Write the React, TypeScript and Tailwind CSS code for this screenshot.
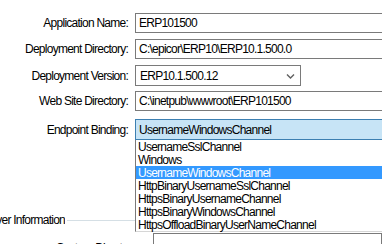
import React from 'react';

const font = "font-['Liberation_Sans',Arial,sans-serif] text-[12px] tracking-[-0.75px] text-black";

const options = [
  'UsernameSslChannel',
  'Windows',
  'UsernameWindowsChannel',
  'HttpBinaryUsernameSslChannel',
  'HttpsBinaryUsernameChannel',
  'HttpsBinaryWindowsChannel',
  'HttpsOffloadBinaryUserNameChannel',
];

function Label({ children }: { children: React.ReactNode }) {
  return <div className="w-[128px] shrink-0 text-right leading-none">{children}</div>;
}

function TextBox({ value }: { value: string }) {
  return (
    <div className="ml-[7px] -mr-[10px] flex h-full flex-1 items-center border border-[#7a7a7a] bg-white pl-[3px] leading-none">
      {value}
    </div>
  );
}

function Chevron() {
  return (
    <svg width="9" height="6" viewBox="0 0 9 6" className="text-[#606060]">
      <path d="M1 1.5 L4.5 5 L8 1.5" fill="none" stroke="currentColor" strokeWidth="1.4" />
    </svg>
  );
}

export default function App() {
  return (
    <div className={`relative h-[244px] w-[382px] overflow-hidden bg-white ${font}`}>
      <div className="flex flex-col">
        {/* Application Name */}
        <div className="mt-[13px] flex h-[20px] items-center">
          <Label>Application Name:</Label>
          <TextBox value="ERP101500" />
        </div>

        {/* Deployment Directory */}
        <div className="mt-[6px] flex h-[20px] items-center">
          <Label>Deployment Directory:</Label>
          <TextBox value="C:\epicor\ERP10\ERP10.1.500.0" />
        </div>

        {/* Deployment Version (combo) */}
        <div className="mt-[6px] flex h-[21px] items-center">
          <Label>Deployment Version:</Label>
          <div className="ml-[7px] flex h-full w-[166px] items-center justify-between border border-[#7a7a7a] bg-white pl-[4px] pr-[5px] leading-none">
            <span>ERP10.1.500.12</span>
            <Chevron />
          </div>
        </div>

        {/* Web Site Directory */}
        <div className="mt-[5px] flex h-[20px] items-center">
          <Label>Web Site Directory:</Label>
          <TextBox value="C:\inetpub\wwwroot\ERP101500" />
        </div>

        {/* Endpoint Binding - open dropdown */}
        <div className="mt-[8px] flex h-[21px] items-center">
          <Label>Endpoint Binding:</Label>
          <div className="relative ml-[7px] -mr-[10px] h-full flex-1">
            <div className="flex h-full items-center border border-[#3c7fb1] bg-[#c7e4f6] pl-[3px] leading-none">
              UsernameWindowsChannel
            </div>
            <div className="absolute left-0 right-0 top-full z-10 border-b border-l border-[#7a7a7a] border-b-[#d6d6d6] bg-white">
              {options.map((o) => (
                <div
                  key={o}
                  className={`flex h-[13px] items-center pl-[2px] leading-none ${
                    o === 'UsernameWindowsChannel' ? 'bg-[#3399ff] text-white' : ''
                  }`}
                >
                  {o}
                </div>
              ))}
            </div>
          </div>
        </div>

        {/* Server Information group */}
        <div className="mt-[73px] flex h-[14px] items-center">
          <div className="flex w-[65px] shrink-0 justify-end overflow-hidden whitespace-nowrap leading-none">
            Server Information
          </div>
          <div className="ml-[2px] h-px flex-1 bg-[#d5dfe5]" />
        </div>

        <div className="mt-[6px] flex h-[20px] items-start">
          <div className="mt-[9px] w-[139px] shrink-0 text-right leading-none">Custom Directory:</div>
          <div className="ml-[14px] h-[20px] flex-1 border border-[#7a7a7a] bg-white" />
        </div>
      </div>
    </div>
  );
}
